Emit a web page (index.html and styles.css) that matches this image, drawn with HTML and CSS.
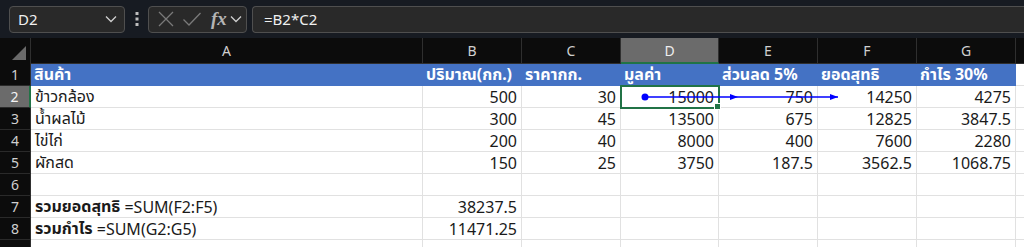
FILE: index.html
```html
<!DOCTYPE html>
<html>
<head>
  <title>Sheet</title>
  <link rel="stylesheet" href="styles.css">
</head>
<body>

  <div class="formula-bar">
    <div class="name-box">
      <span>D2</span>
      <svg class="chev" width="12" height="8" viewBox="0 0 12 8"><path d="M1 1.5 L6 6.5 L11 1.5" fill="none" stroke="#cfcfcf" stroke-width="1.3"/></svg>
    </div>
    <div class="dots">
      <svg width="4" height="14" viewBox="0 0 4 14"><rect x="0.5" y="0" width="3" height="3" fill="#bdbdbd"/><rect x="0.5" y="5.5" width="3" height="3" fill="#bdbdbd"/><rect x="0.5" y="11" width="3" height="3" fill="#bdbdbd"/></svg>
    </div>
    <div class="fx-box">
      <svg width="18" height="18" viewBox="0 0 18 18"><path d="M2 2 L16 16 M16 2 L2 16" stroke="#7a7a7a" stroke-width="1.3"/></svg>
      <svg width="20" height="16" viewBox="0 0 20 16"><path d="M1.5 8.5 L7 14 L18.5 2" fill="none" stroke="#7a7a7a" stroke-width="1.3"/></svg>
      <span class="fx">fx</span>
      <svg class="chev" width="12" height="8" viewBox="0 0 12 8"><path d="M1 1.5 L6 6.5 L11 1.5" fill="none" stroke="#cfcfcf" stroke-width="1.3"/></svg>
    </div>
    <div class="formula-input">=B2*C2</div>
  </div>

  <div class="sheet">
    <div class="corner"><span class="tri"></span></div>
    <div class="col-head">A</div>
    <div class="col-head">B</div>
    <div class="col-head">C</div>
    <div class="col-head sel">D</div>
    <div class="col-head">E</div>
    <div class="col-head">F</div>
    <div class="col-head">G</div>
    <div class="col-head blank"></div>

    <div class="row-head">1</div>
    <div class="cell hdr">สินค้า</div>
    <div class="cell hdr">ปริมาณ(กก.)</div>
    <div class="cell hdr">ราคากก.</div>
    <div class="cell hdr">มูลค่า</div>
    <div class="cell hdr">ส่วนลด 5%</div>
    <div class="cell hdr">ยอดสุทธิ</div>
    <div class="cell hdr">กำไร 30%</div>
    <div class="cell"></div>

    <div class="row-head sel">2</div>
    <div class="cell">ข้าวกล้อง</div>
    <div class="cell num">500</div>
    <div class="cell num">30</div>
    <div class="cell num active">15000</div>
    <div class="cell num">750</div>
    <div class="cell num">14250</div>
    <div class="cell num">4275</div>
    <div class="cell"></div>

    <div class="row-head">3</div>
    <div class="cell">น้ำผลไม้</div>
    <div class="cell num">300</div>
    <div class="cell num">45</div>
    <div class="cell num">13500</div>
    <div class="cell num">675</div>
    <div class="cell num">12825</div>
    <div class="cell num">3847.5</div>
    <div class="cell"></div>

    <div class="row-head">4</div>
    <div class="cell">ไข่ไก่</div>
    <div class="cell num">200</div>
    <div class="cell num">40</div>
    <div class="cell num">8000</div>
    <div class="cell num">400</div>
    <div class="cell num">7600</div>
    <div class="cell num">2280</div>
    <div class="cell"></div>

    <div class="row-head">5</div>
    <div class="cell">ผักสด</div>
    <div class="cell num">150</div>
    <div class="cell num">25</div>
    <div class="cell num">3750</div>
    <div class="cell num">187.5</div>
    <div class="cell num">3562.5</div>
    <div class="cell num">1068.75</div>
    <div class="cell"></div>

    <div class="row-head">6</div>
    <div class="cell"></div><div class="cell"></div><div class="cell"></div><div class="cell"></div>
    <div class="cell"></div><div class="cell"></div><div class="cell"></div><div class="cell"></div>

    <div class="row-head">7</div>
    <div class="cell"><b>รวมยอดสุทธิ</b>&nbsp;=SUM(F2:F5)</div>
    <div class="cell num">38237.5</div>
    <div class="cell"></div><div class="cell"></div><div class="cell"></div>
    <div class="cell"></div><div class="cell"></div><div class="cell"></div>

    <div class="row-head">8</div>
    <div class="cell"><b>รวมกำไร</b>&nbsp;=SUM(G2:G5)</div>
    <div class="cell num">11471.25</div>
    <div class="cell"></div><div class="cell"></div><div class="cell"></div>
    <div class="cell"></div><div class="cell"></div><div class="cell"></div>

    <div class="row-head"></div>
    <div class="cell"></div><div class="cell"></div><div class="cell"></div><div class="cell"></div>
    <div class="cell"></div><div class="cell"></div><div class="cell"></div><div class="cell"></div>

    <!-- trace dependents arrows from D2 -->
    <svg class="trace" width="220" height="10" viewBox="0 0 220 10">
      <circle cx="4" cy="5" r="3.5" fill="#0000ff"/>
      <line x1="4" y1="5" x2="197" y2="5" stroke="#0000ff" stroke-width="1.3"/>
      <path d="M89 2 L97 5 L89 8 Z" fill="#0000ff"/>
      <path d="M189 2 L197 5 L189 8 Z" fill="#0000ff"/>
    </svg>
  </div>

</body>
</html>
```

FILE: styles.css
```css
body {
  margin: 0;
  background-color: #171b22;
  font-family: "Noto Sans", "Noto Sans Thai", "Liberation Sans", sans-serif;
  overflow: hidden;
}
.formula-bar {
  display: flex;
  align-items: center;
  height: 38px;
  padding: 0 0 0 9px;
  box-sizing: border-box;
  background-color: #171b22;
}
.name-box, .fx-box, .formula-input {
  height: 27px;
  box-sizing: border-box;
  background-color: #292929;
  border: 1px solid #4f4f4f;
  border-radius: 4px;
  display: flex;
  align-items: center;
  color: #f0f0f0;
  font-size: 15px;
}
.name-box {
  width: 116px;
  padding: 0 7px 0 8px;
  justify-content: space-between;
}
.dots {
  width: 23px;
  display: flex;
  justify-content: center;
}
.fx-box {
  width: 99px;
  padding: 0 4px 0 8px;
  gap: 7px;
}
.fx {
  font-family: "Liberation Serif", serif;
  font-style: italic;
  font-weight: bold;
  font-size: 19px;
  color: #b4b4b4;
  margin-left: 2px;
  margin-right: -4px;
}
.formula-input {
  flex: 1;
  margin-left: 5px;
  padding-left: 11px;
  border-right: none;
  border-radius: 4px 0 0 4px;
}

.sheet {
  position: relative;
  display: grid;
  grid-template-columns: 31px 392px 99px 99px 98px 99px 99px 99px 1fr;
  grid-template-rows: 26px repeat(9, 22px);
  background-color: #ffffff;
}
.corner {
  background-color: #0c0c0c;
  border-right: 1px solid #2f2f2f;
  position: relative;
}
.tri {
  position: absolute;
  right: 4px;
  bottom: 4px;
  width: 0;
  height: 0;
  border-left: 14px solid transparent;
  border-bottom: 14px solid #6a6a6a;
}
.col-head {
  background-color: #0c0c0c;
  color: #d0d0d0;
  font-size: 14px;
  display: flex;
  align-items: center;
  justify-content: center;
  border-right: 1px solid #2f2f2f;
  border-bottom: 1px solid #2f2f2f;
}
.col-head.sel {
  background-color: #6b6b6b;
  color: #eeeeee;
  border-bottom: 2px solid #217346;
}
.col-head.blank {
  border-right: none;
}
.row-head {
  background-color: #0c0c0c;
  color: #d0d0d0;
  font-size: 14px;
  display: flex;
  align-items: center;
  justify-content: center;
  border-right: 1px solid #2f2f2f;
  border-bottom: 1px solid #2a2a2a;
}
.row-head.sel {
  background-color: #6b6b6b;
  color: #f4f4f4;
  border-right: 2px solid #217346;
}
.cell {
  border-right: 1px solid #e1e1e1;
  border-bottom: 1px solid #e1e1e1;
  padding: 0 4px;
  font-size: 16px;
  color: #1a1a1a;
  display: flex;
  align-items: center;
  white-space: nowrap;
  overflow: visible;
}
.cell.num {
  justify-content: flex-end;
}
.cell.hdr {
  background-color: #4472c4;
  color: #ffffff;
  font-weight: bold;
  border-right: none;
  border-bottom-color: #4472c4;
  padding-left: 3px;
}
.cell.active {
  position: relative;
  outline: 2px solid #217346;
  outline-offset: -1px;
}
.cell.active::after {
  content: "";
  position: absolute;
  right: -3px;
  bottom: -3px;
  width: 5px;
  height: 5px;
  background-color: #217346;
  border: 1px solid #ffffff;
}
.trace {
  position: absolute;
  left: 641px;
  top: 54px;
}
```
